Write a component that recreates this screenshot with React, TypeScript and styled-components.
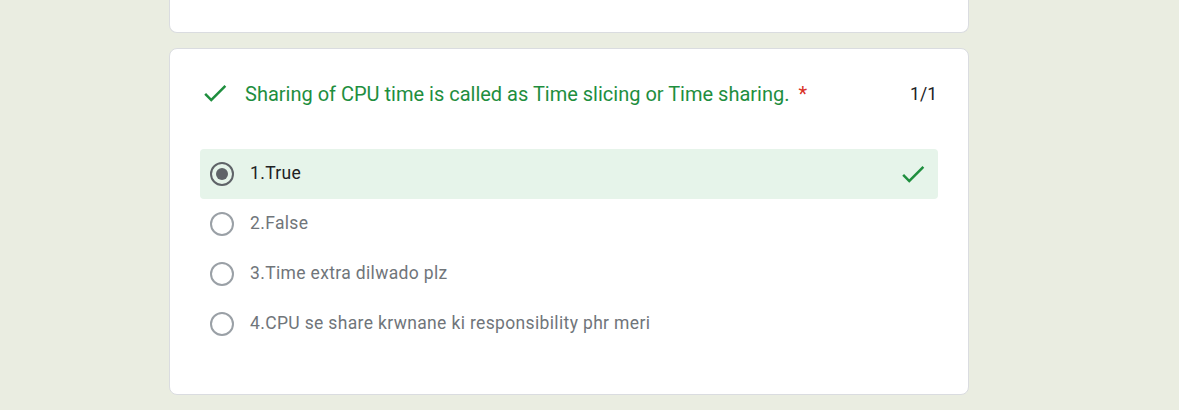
import styled, { createGlobalStyle } from 'styled-components';

const GlobalStyle = createGlobalStyle`
	body {
		margin: 0;
		background-color: #eaede1;
		font-family: Roboto, "Liberation Sans", Arial, sans-serif;
	}
`;

type Option = { label: string; chosen?: boolean; correct?: boolean };

const options: Option[] = [
	{ label: '1.True', chosen: true, correct: true },
	{ label: '2.False' },
	{ label: '3.Time extra dilwado plz' },
	{ label: '4.CPU se share krwnane ki responsibility phr meri' },
];

const CheckIcon = ({ size = 30 }: { size?: number }) => (
	<svg width={size} height={size} viewBox="0 0 24 24" fill="#1e8e3e">
		<path d="M9 16.17L4.83 12l-1.42 1.41L9 19 21 7l-1.41-1.41z" />
	</svg>
);

const App = () => {
	return (
		<>
			<GlobalStyle />
			<Page>
				<PrevCard />
				<QuestionCard>
					<Header>
						<TitleIcon>
							<CheckIcon />
						</TitleIcon>
						<Title>
							Sharing of CPU time is called as Time slicing or Time sharing.
							<Required>*</Required>
						</Title>
						<Points>1/1</Points>
					</Header>
					<OptionList>
						{options.map((o) => (
							<OptionRow key={o.label} $chosen={!!o.chosen}>
								<Radio $chosen={!!o.chosen} />
								<OptionText $chosen={!!o.chosen}>{o.label}</OptionText>
								{o.correct && (
									<RowMark>
										<CheckIcon />
									</RowMark>
								)}
							</OptionRow>
						))}
					</OptionList>
				</QuestionCard>
			</Page>
		</>
	);
};
export default App;

const Page = styled.div`
	display: flex;
	flex-direction: column;
	align-items: flex-start;
	gap: 15px;
	padding: 0 0 16px 169px;
`;

const PrevCard = styled.div`
	box-sizing: border-box;
	width: 800px;
	height: 33px;
	background-color: #fff;
	border: 1px solid #dadce0;
	border-top: none;
	border-radius: 0 0 8px 8px;
`;

const QuestionCard = styled.div`
	box-sizing: border-box;
	width: 800px;
	background-color: #fff;
	border: 1px solid #dadce0;
	border-radius: 8px;
	padding: 33px 30px 45px 30px;
`;

const Header = styled.div`
	display: flex;
	align-items: flex-start;
	height: 24px;
`;

const TitleIcon = styled.div`
	width: 30px;
	height: 30px;
	margin-top: -4px;
	margin-right: 15px;
	flex-shrink: 0;
`;

const Title = styled.div`
	font-size: 20px;
	line-height: 24px;
	color: #1e8e3e;
`;

const Required = styled.span`
	color: #d93025;
	margin-left: 9px;
`;

const Points = styled.div`
	margin-left: auto;
	margin-right: 1px;
	font-size: 17.5px;
	line-height: 24px;
	color: #202124;
`;

const OptionList = styled.div`
	display: flex;
	flex-direction: column;
	margin-top: 43px;
`;

const OptionRow = styled.div<{ $chosen: boolean }>`
	display: flex;
	align-items: center;
	height: 50px;
	padding: 0 10px 0 10px;
	border-radius: 4px;
	background-color: ${(p) => (p.$chosen ? '#e6f4ea' : 'transparent')};
`;

const Radio = styled.div<{ $chosen: boolean }>`
	box-sizing: border-box;
	width: 24px;
	height: 24px;
	border-radius: 50%;
	border: 2px solid ${(p) => (p.$chosen ? '#5f6368' : '#9aa0a6')};
	display: flex;
	align-items: center;
	justify-content: center;
	flex-shrink: 0;
	&::after {
		content: '';
		display: ${(p) => (p.$chosen ? 'block' : 'none')};
		width: 12px;
		height: 12px;
		border-radius: 50%;
		background-color: #5f6368;
	}
`;

const OptionText = styled.div<{ $chosen: boolean }>`
	margin-left: 16px;
	padding-bottom: 2px;
	font-size: 17.5px;
	line-height: 24px;
	color: ${(p) => (p.$chosen ? '#202124' : '#70757a')};
	letter-spacing: 0.35px;
`;

const RowMark = styled.div`
	margin-left: auto;
	width: 30px;
	height: 30px;
`;
